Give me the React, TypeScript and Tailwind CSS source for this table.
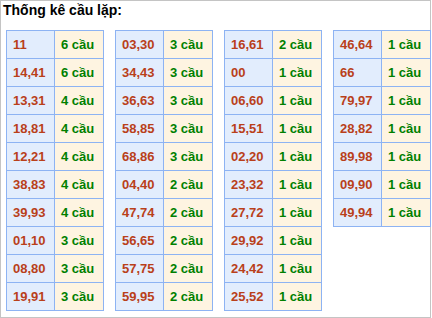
type Pair = [string, number];

const tables: Pair[][] = [
  [
    ['11', 6], ['14,41', 6], ['13,31', 4], ['18,81', 4], ['12,21', 4],
    ['38,83', 4], ['39,93', 4], ['01,10', 3], ['08,80', 3], ['19,91', 3],
  ],
  [
    ['03,30', 3], ['34,43', 3], ['36,63', 3], ['58,85', 3], ['68,86', 3],
    ['04,40', 2], ['47,74', 2], ['56,65', 2], ['57,75', 2], ['59,95', 2],
  ],
  [
    ['16,61', 2], ['00', 1], ['06,60', 1], ['15,51', 1], ['02,20', 1],
    ['23,32', 1], ['27,72', 1], ['29,92', 1], ['24,42', 1], ['25,52', 1],
  ],
  [
    ['46,64', 1], ['66', 1], ['79,97', 1], ['28,82', 1], ['89,98', 1],
    ['09,90', 1], ['49,94', 1],
  ],
];

function RepeatTable({ rows }: { rows: Pair[] }) {
  return (
    <div className="w-[98px] border-l border-t border-[#8db3f3]">
      {rows.map(([pair, count]) => (
        <div key={pair} className="flex h-[28px]">
          {/* loto pair */}
          <div className="w-[48px] border-r border-b border-[#8db3f3] bg-[#e2edfd] pl-[6px] flex items-center text-[#b9401a]">
            {pair}
          </div>
          {/* times repeated */}
          <div className="w-[49px] border-r border-b border-[#8db3f3] bg-[#fef4e1] pl-[6px] flex items-center text-[#008000]">
            {count} cầu
          </div>
        </div>
      ))}
    </div>
  );
}

export default function App() {
  return (
    <div
      className="w-[431px] h-[318px] border border-[#c4c4c4] bg-white"
      style={{ fontFamily: '"Liberation Sans", Arial, sans-serif' }}
    >
      <div className="pt-[1px] pl-[2px] text-[14px] leading-[16px] font-bold text-black">
        Thống kê cầu lặp:
      </div>
      <div className="mt-[12px] pl-[5px] flex items-start gap-[11px] text-[13px] leading-[15px] font-bold">
        {tables.map((rows, i) => (
          <RepeatTable key={i} rows={rows} />
        ))}
      </div>
    </div>
  );
}
